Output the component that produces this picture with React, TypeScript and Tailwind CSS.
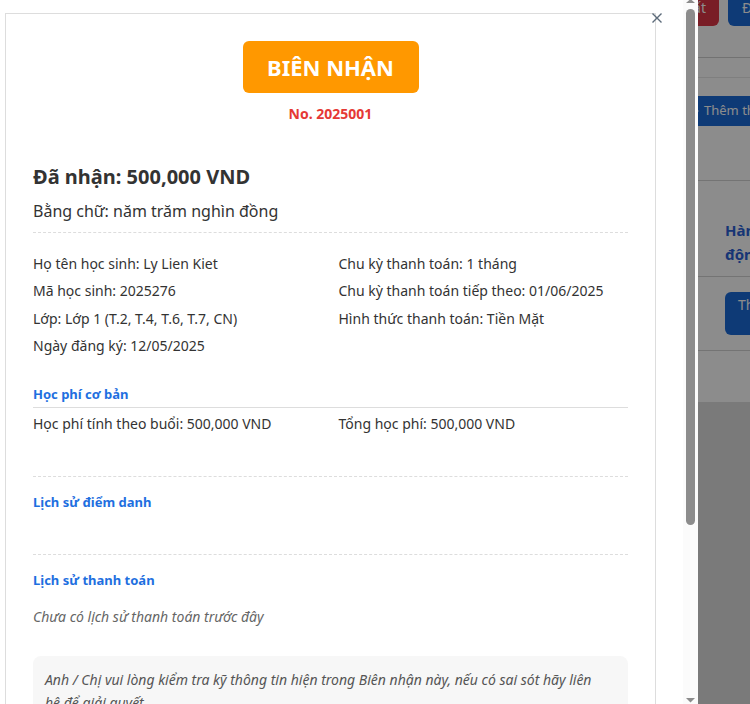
import React from 'react';

// Trang phía sau (bị phủ mờ bởi lớp overlay)
function BackgroundPage() {
  return (
    <div className="flex h-[704px] w-[750px] overflow-hidden bg-[#dedede]">
      <div className="w-[650px] shrink-0 bg-white" />
      <div className="flex h-[402px] w-[300px] shrink-0 flex-col bg-white">
        <div className="flex h-[58px] shrink-0 border-b border-[#cfcfcf]">
          <div className="-mt-[10px] flex h-[36px] gap-[9px]">
            <div className="flex w-[69px] items-center justify-end rounded-md bg-[#dc3545] pr-[13px] text-sm text-white">
              Xuất
            </div>
            <div className="flex items-center whitespace-nowrap rounded-md bg-[#1a6ad8] px-[14px] text-sm text-white">
              Đăng ký
            </div>
          </div>
        </div>
        <div className="h-[20px] shrink-0 border-b border-[#e8e8e8]" />
        <div className="ml-[20px] mt-[18px] flex h-[30px] w-[200px] items-center gap-[5px] rounded-md bg-[#1a6ad8] pl-[19px] text-[13px] whitespace-nowrap text-white">
          <svg width="10" height="10" viewBox="0 0 10 10" fill="none" stroke="currentColor" strokeWidth="1.6">
            <path d="M5 0.5v9M0.5 5h9" />
          </svg>
          Thêm thanh toán
        </div>
        <div className="mt-[54px] border-b border-[#d4d4d4]" />
        <div className="ml-[75px] mt-[37px] text-[15px] font-bold leading-[24px] text-[#2a62d6]">
          Hành
          <br />
          động
        </div>
        <div className="mt-[10px] border-b border-[#d4d4d4]" />
        <div className="ml-[75px] mt-[15px] h-[43px] w-[90px] whitespace-nowrap rounded-md bg-[#1a6ad8] pl-[13px] pt-[3px] text-sm leading-5 text-white">
          Thu tiền
        </div>
        <div className="mt-[15px] border-b border-[#d4d4d4]" />
      </div>
    </div>
  );
}

function InfoLine({ children }: { children: React.ReactNode }) {
  return <div className="text-sm leading-5 text-[#333]">{children}</div>;
}

function SectionTitle({ children }: { children: React.ReactNode }) {
  return <div className="text-[13px] font-bold leading-[18px] text-[#1e6fe0]">{children}</div>;
}

// Thanh cuộn của modal (vẽ lại vì trình duyệt chụp ảnh ẩn thanh cuộn)
function ScrollBar() {
  return (
    <div className="flex w-[15px] shrink-0 flex-col items-center bg-[#fbfbfb]">
      <svg width="9" height="3" viewBox="0 0 9 3" className="shrink-0 text-[#8c8c8c]">
        <path d="M0 3L4.5 -1L9 3Z" fill="currentColor" />
      </svg>
      <div className="mt-[6px] h-[516px] w-[9px] rounded-full bg-[#8c8c8c]" />
      <div className="flex-1" />
      <svg width="9" height="5" viewBox="0 0 9 5" className="mb-[1px] shrink-0 text-[#8c8c8c]">
        <path d="M0 0L9 0L4.5 4.5Z" fill="currentColor" />
      </svg>
    </div>
  );
}

export default function App() {
  return (
    <div className="relative h-[704px] w-[750px] overflow-hidden font-['Noto_Sans',sans-serif]">
      <BackgroundPage />
      {/* Lớp phủ tối */}
      <div className="fixed inset-0 bg-black/45" />

      {/* Modal biên nhận */}
      <div className="fixed left-0 top-0 flex h-[704px] w-[698px] bg-white">
        <div className="min-w-0 flex-1 overflow-hidden">
          <div className="relative ml-[5px] mt-[13px] w-[651px] border border-[#dddddd] px-[27px] pb-[200px] pt-[27px]">
            <button type="button" className="absolute left-[646px] top-[-1px] text-[#5c6b7a]">
              <svg width="10" height="10" viewBox="0 0 10 10" fill="none" stroke="currentColor" strokeWidth="1.4">
                <path d="M0.5 0.5l9 9M9.5 0.5l-9 9" />
              </svg>
            </button>

            <div className="mx-auto flex h-[52px] w-[176px] items-center justify-center rounded-md bg-[#ff9800] text-[22px] font-bold text-white">
              BIÊN NHẬN
            </div>
            <div className="mt-[11px] text-center text-sm font-bold leading-5 text-[#e53935]">No. 2025001</div>

            <div className="mt-[39px] text-[20px] font-bold leading-[28px] text-[#333]">Đã nhận: 500,000 VND</div>
            <div className="mt-[8px] text-base leading-6 text-[#333]">Bằng chữ: năm trăm nghìn đồng</div>
            <div className="mt-[9px] border-t border-dashed border-[#dddddd]" />

            <div className="mt-[21px] grid grid-cols-2 gap-x-4">
              <div className="flex flex-col gap-[7.3px]">
                <InfoLine>Họ tên học sinh: Ly Lien Kiet</InfoLine>
                <InfoLine>Mã học sinh: 2025276</InfoLine>
                <InfoLine>Lớp: Lớp 1 (T.2, T.4, T.6, T.7, CN)</InfoLine>
                <InfoLine>Ngày đăng ký: 12/05/2025</InfoLine>
              </div>
              <div className="flex flex-col gap-[7.3px]">
                <InfoLine>Chu kỳ thanh toán: 1 tháng</InfoLine>
                <InfoLine>Chu kỳ thanh toán tiếp theo: 01/06/2025</InfoLine>
                <InfoLine>Hình thức thanh toán: Tiền Mặt</InfoLine>
              </div>
            </div>

            <div className="mt-[29px] border-b border-[#dddddd] pb-[4px]">
              <SectionTitle>Học phí cơ bản</SectionTitle>
            </div>
            <div className="mt-[6px] grid grid-cols-2 gap-x-4">
              <InfoLine>Học phí tính theo buổi: 500,000 VND</InfoLine>
              <InfoLine>Tổng học phí: 500,000 VND</InfoLine>
            </div>

            <div className="mt-[42px] border-t border-dashed border-[#dddddd]" />
            <div className="mt-[16px]">
              <SectionTitle>Lịch sử điểm danh</SectionTitle>
            </div>

            <div className="mt-[43px] border-t border-dashed border-[#dddddd]" />
            <div className="mt-[16px]">
              <SectionTitle>Lịch sử thanh toán</SectionTitle>
            </div>
            <div className="mt-[18px] text-sm italic leading-5 text-[#666]">Chưa có lịch sử thanh toán trước đây</div>

            <div className="mt-[29px] rounded-lg bg-[#f7f7f7] py-3 pl-3 pr-[22px] text-sm italic leading-[23px] text-[#555]">
              Anh / Chị vui lòng kiểm tra kỹ thông tin hiện trong Biên nhận này, nếu có sai sót hãy liên hệ để giải quyết.
            </div>
          </div>
        </div>
        <ScrollBar />
      </div>
    </div>
  );
}
